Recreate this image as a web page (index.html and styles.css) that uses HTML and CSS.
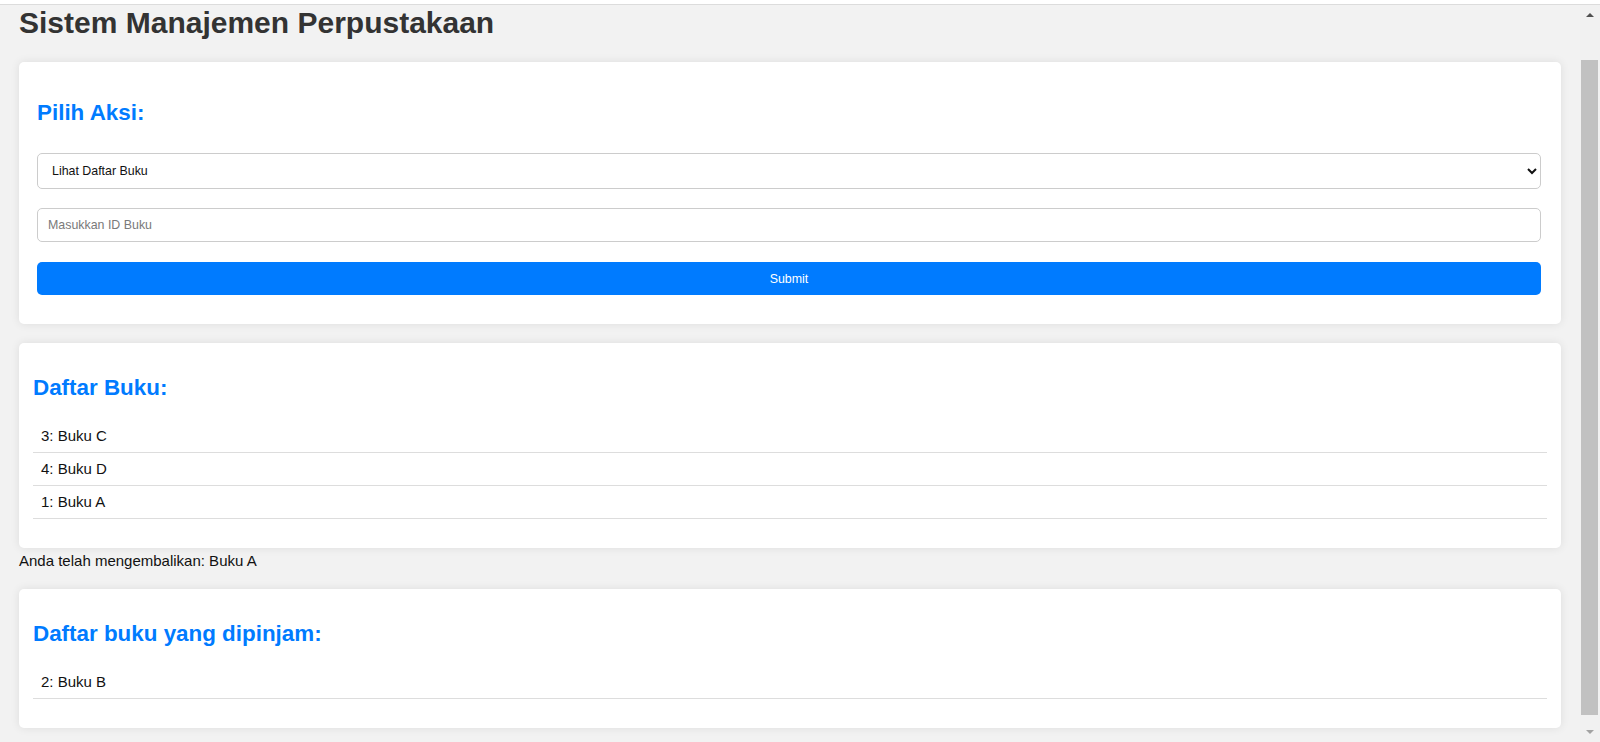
FILE: index.html
```html
<!DOCTYPE html>
<html lang="id">
<head>
<meta charset="utf-8">
<title>Sistem Manajemen Perpustakaan</title>
<link rel="stylesheet" href="styles.css">
</head>
<body>
<div class="chrome-top"></div>
<div class="window">
  <main class="page">
    <h1 class="title">Sistem Manajemen Perpustakaan</h1>

    <section class="card card-form">
      <h2 class="card-title">Pilih Aksi:</h2>
      <form class="form">
        <select class="control select">
          <option>Lihat Daftar Buku</option>
          <option>Pinjam Buku</option>
          <option>Kembalikan Buku</option>
        </select>
        <input class="control input" type="text" placeholder="Masukkan ID Buku">
        <button class="btn" type="button">Submit</button>
      </form>
    </section>

    <section class="card card-list">
      <h2 class="card-title">Daftar Buku:</h2>
      <ul class="book-list">
        <li>3: Buku C</li>
        <li>4: Buku D</li>
        <li>1: Buku A</li>
      </ul>
    </section>

    <p class="message">Anda telah mengembalikan: Buku A</p>

    <section class="card card-list">
      <h2 class="card-title">Daftar buku yang dipinjam:</h2>
      <ul class="book-list">
        <li>2: Buku B</li>
      </ul>
    </section>
  </main>

  <aside class="scrollbar" aria-hidden="true">
    <div class="sb-btn"><span class="tri tri-up"></span></div>
    <div class="sb-track"><div class="sb-thumb"></div></div>
    <div class="sb-btn"><span class="tri tri-down"></span></div>
  </aside>
</div>
</body>
</html>
```
FILE: styles.css
```css
* { box-sizing: border-box; }

html, body {
  margin: 0;
  height: 742px;
  overflow: hidden;
}

body {
  font-family: "Liberation Sans", Arial, sans-serif;
  background: #f2f2f2;
  color: #111;
  display: flex;
  flex-direction: column;
}

.chrome-top {
  height: 5px;
  background: #ffffff;
  border-bottom: 1px solid #dcdcdc;
  flex: none;
}

.window {
  flex: 1;
  display: flex;
  min-height: 0;
}

.page {
  flex: 1;
  padding: 0 19px;
  overflow: hidden;
  background: #f2f2f2;
}

.title {
  margin: 1px 0 22px;
  font-size: 30px;
  line-height: 34px;
  font-weight: bold;
  color: #333333;
}

.card {
  background: #ffffff;
  border-radius: 5px;
  box-shadow: 0 0 10px rgba(0, 0, 0, 0.09);
}

.card-form {
  padding: 20px 20px 29px 18px;
}

.card-list {
  padding: 14px;
  margin-top: 19px;
}

.card-title {
  margin: 18px 0 20px;
  font-size: 22.4px;
  line-height: 25px;
  font-weight: bold;
  color: #007bff;
}

.form {
  display: flex;
  flex-direction: column;
  padding-top: 8px;
}

.control {
  display: block;
  width: 100%;
  font-family: "Liberation Sans", Arial, sans-serif;
  font-size: 12.4px;
  color: #111;
  background: #ffffff;
  border: 1px solid #cccccc;
  border-radius: 5px;
}

.select {
  height: 36px;
  padding: 0 8px 0 10px;
}

.input {
  height: 34px;
  margin-top: 19px;
  padding: 0 10px;
  outline: none;
}

.input::placeholder {
  color: #7a7a7a;
}

.btn {
  display: block;
  width: 100%;
  height: 33px;
  margin-top: 20px;
  border: none;
  border-radius: 5px;
  background: #007bff;
  color: #ffffff;
  font-family: "Liberation Sans", Arial, sans-serif;
  font-size: 12.4px;
}

.book-list {
  list-style: none;
  margin: 0 0 15px;
  padding: 0;
}

.book-list li {
  padding: 7px 8px 8px;
  font-size: 15px;
  line-height: 17px;
  border-bottom: 1px solid #dddddd;
  color: #111;
}

.message {
  margin: 4px 0 20px;
  font-size: 15px;
  line-height: 17px;
  color: #111;
}

.message + .card-list {
  margin-top: 0;
}

/* fake classic scrollbar */
.scrollbar {
  width: 20px;
  flex: none;
  display: flex;
  flex-direction: column;
  background: #f1f1f1;
}

.sb-btn {
  height: 20px;
  flex: none;
  display: flex;
  align-items: center;
  justify-content: center;
}

.sb-track {
  flex: 1;
  display: flex;
  flex-direction: column;
  padding: 35px 2px 7px 1px;
}

.sb-thumb {
  flex: 1;
  background: #c1c1c1;
}

.tri {
  width: 0;
  height: 0;
  border-left: 4px solid transparent;
  border-right: 4px solid transparent;
}

.tri-up {
  border-bottom: 4px solid #505050;
}

.tri-down {
  border-top: 4px solid #a3a3a3;
}
```
